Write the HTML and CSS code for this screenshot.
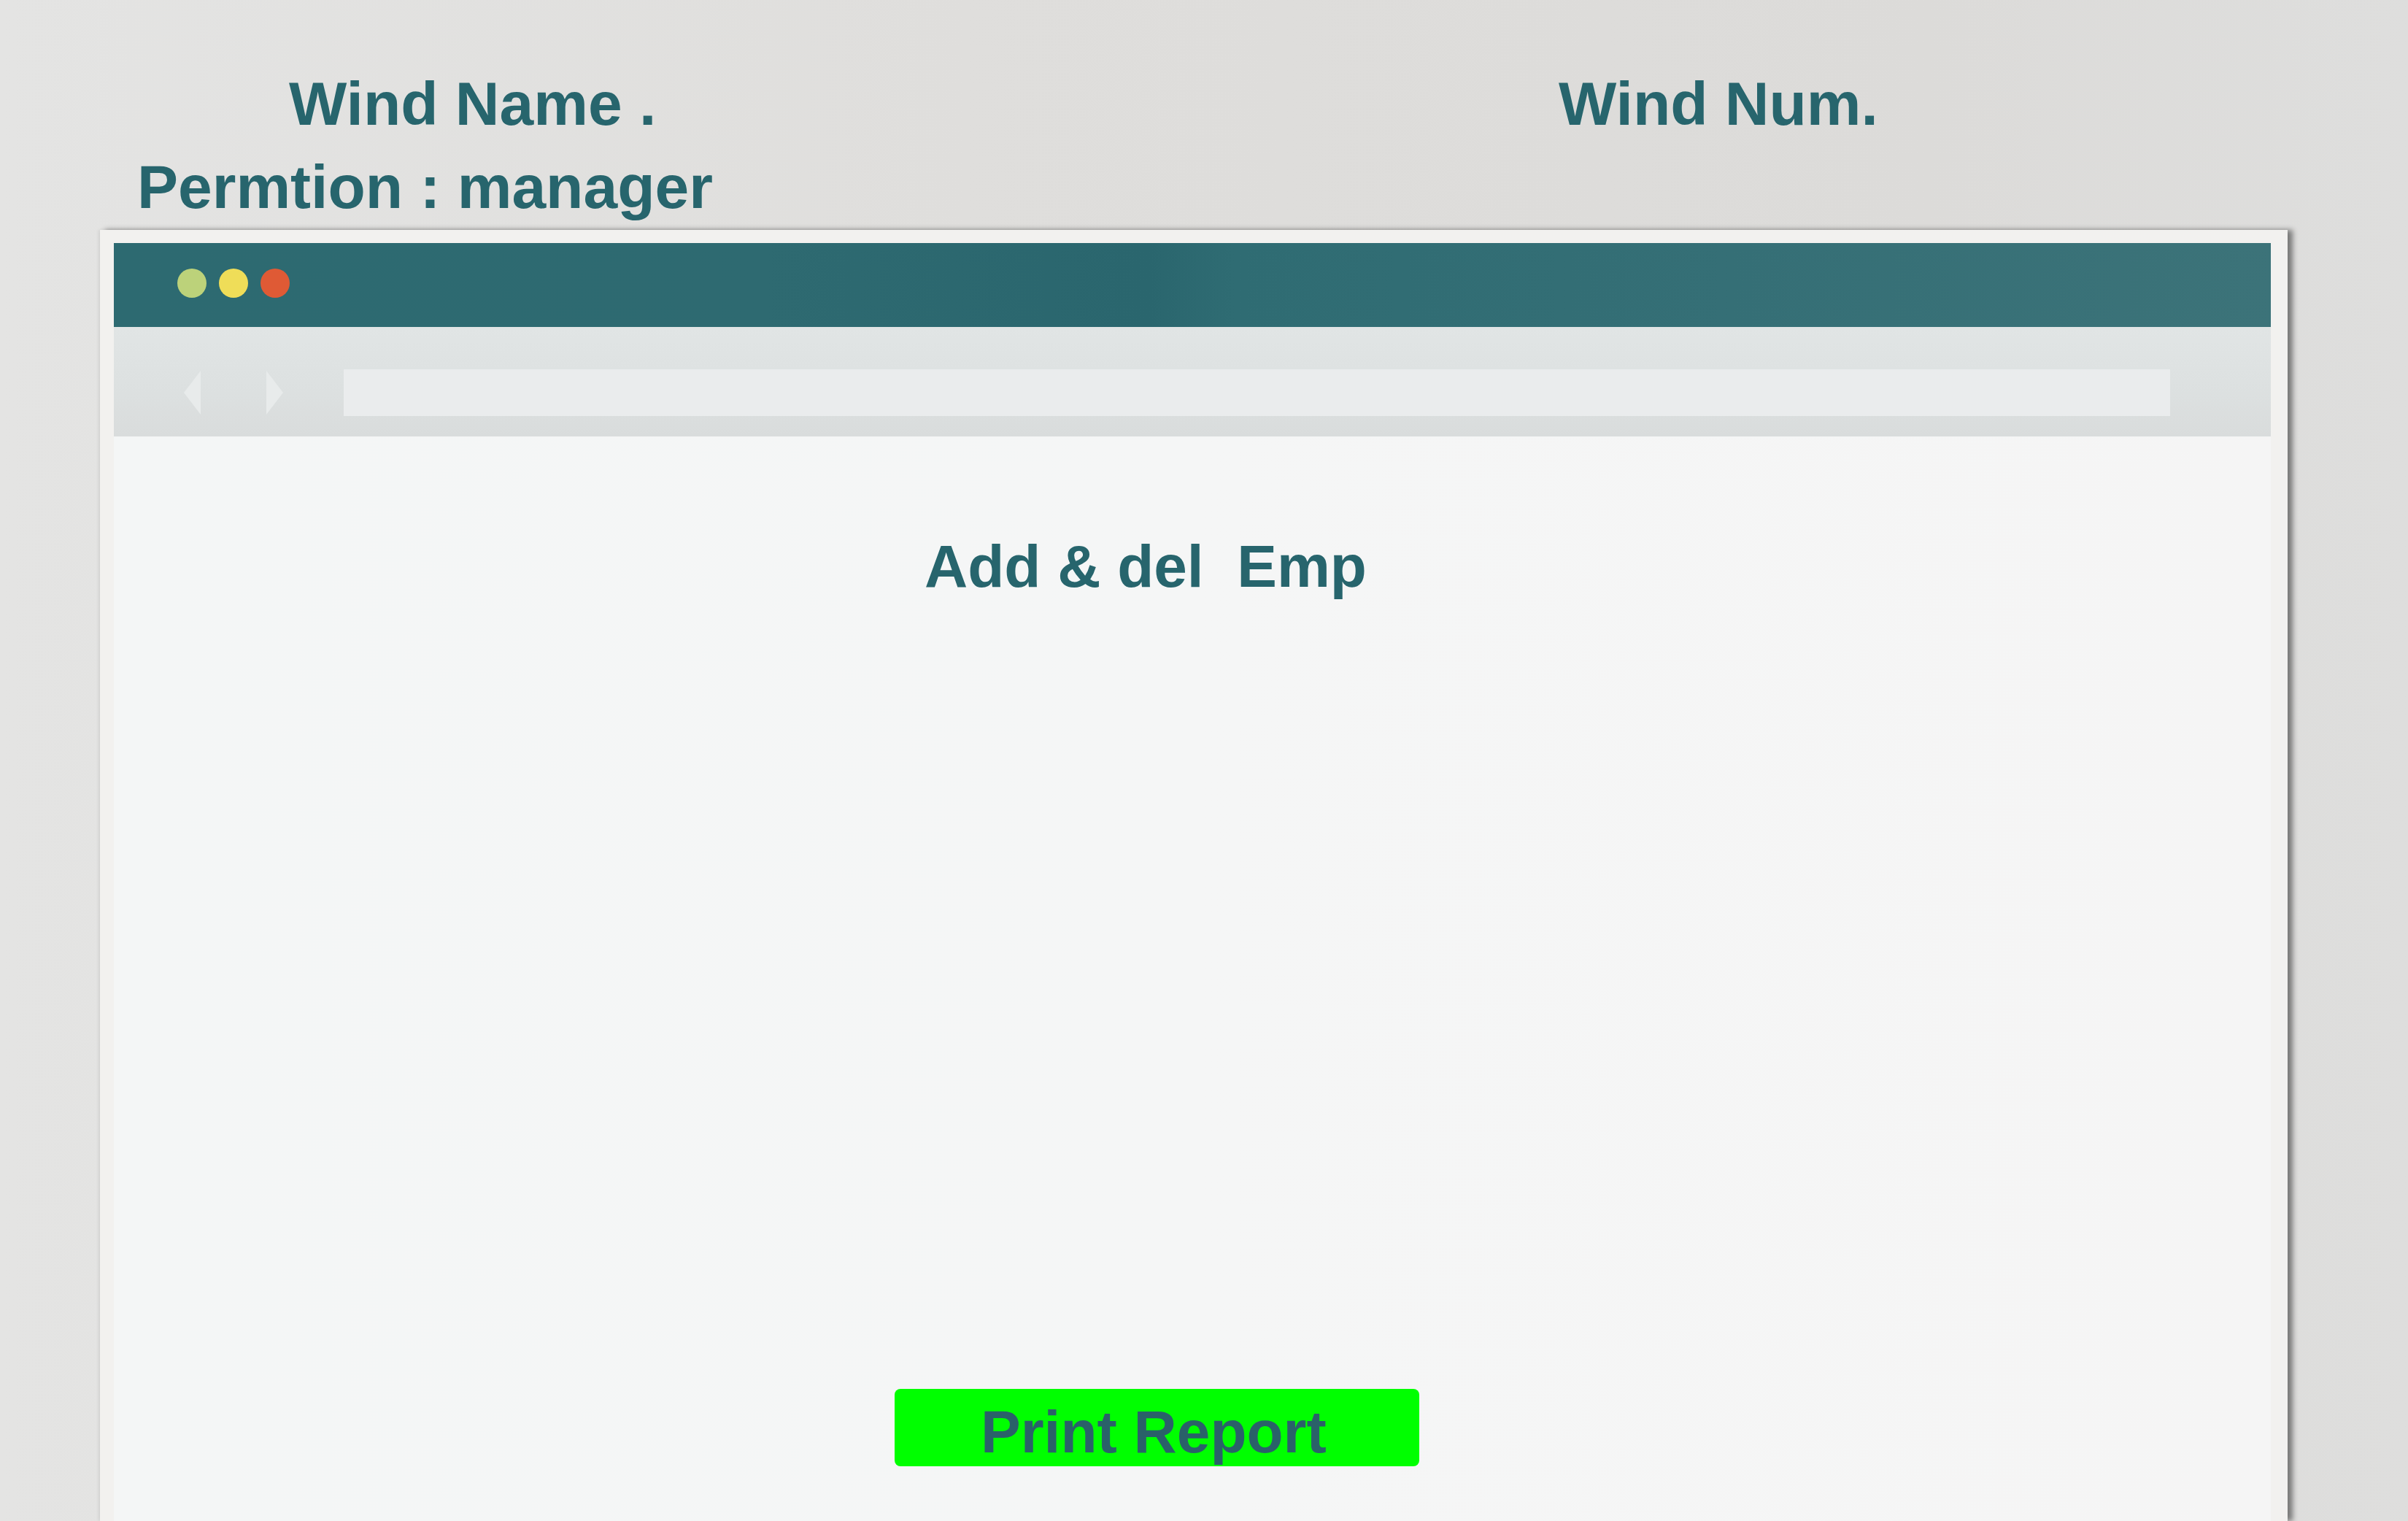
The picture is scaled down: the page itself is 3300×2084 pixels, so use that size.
FILE: index.html
```html
<!DOCTYPE html>
<html>
<head>
<meta charset="utf-8">
<link rel="stylesheet" href="styles.css">
</head>
<body>
<div class="page">
  <header class="top">
    <div class="row1">
      <span class="wname">Wind Name .</span>
      <span class="wnum">Wind Num.</span>
    </div>
    <div class="perm">Permtion : manager</div>
  </header>
  <div class="frame">
    <div class="titlebar">
      <span class="dot green"></span>
      <span class="dot yellow"></span>
      <span class="dot red"></span>
    </div>
    <div class="navbar">
      <svg class="arrow back" width="23" height="60" viewBox="0 0 23 60"><polygon points="23,0 23,60 0,30" /></svg>
      <svg class="arrow fwd" width="23" height="60" viewBox="0 0 23 60"><polygon points="0,0 0,60 23,30" /></svg>
      <div class="address"></div>
    </div>
    <main class="content">
      <h1 class="title">Add &amp; del  Emp</h1>
      <button class="print">Print Report</button>
    </main>
  </div>
</div>
</body>
</html>
```
FILE: styles.css
```css
html, body {
  margin: 0;
  padding: 0;
}
body {
  width: 3300px;
  height: 2084px;
  overflow: hidden;
  background: linear-gradient(90deg, #e4e4e3 0%, #dfdedc 40%, #dcdbd9 80%, #dededd 100%);
  font-family: "Liberation Sans", Arial, sans-serif;
  font-weight: bold;
  color: #27656d;
}
.page {
  display: flex;
  flex-direction: column;
  height: 2084px;
}
.top {
  padding: 92px 0 0 188px;
  font-size: 84px;
  line-height: 100px;
}
.row1 {
  display: flex;
  white-space: pre;
}
.wname {
  margin-left: 208px;
  width: 1740px;
}
.perm {
  margin-top: 14px;
  white-space: pre;
}
.frame {
  margin: 9px 0 0 137px;
  width: 2998px;
  flex: 1;
  box-sizing: border-box;
  padding: 18px 23px 0 19px;
  background: #f2f1ef;
  box-shadow: 7px 0 7px rgba(0, 0, 0, 0.45), -2px 0 4px rgba(0, 0, 0, 0.08);
  display: flex;
  flex-direction: column;
}
.titlebar {
  height: 115px;
  box-sizing: border-box;
  padding: 0 0 6px 87px;
  display: flex;
  align-items: center;
  gap: 17px;
  background: linear-gradient(90deg, #2d6a71 0%, #2e6a71 30%, #2a666e 48%, #2f6c73 52%, #356f76 75%, #3c7379 100%);
}
.dot {
  width: 40px;
  height: 40px;
  border-radius: 50%;
}
.green { background: #bcd27a; }
.yellow { background: #efdd58; }
.red { background: #df5a35; }
.navbar {
  height: 150px;
  box-sizing: border-box;
  padding: 58px 138px 28px 96px;
  display: flex;
  align-items: center;
  background: linear-gradient(180deg, #e1e5e5 0%, #dde1e1 50%, #d9dcdc 100%);
}
.arrow {
  fill: #e8ebeb;
  flex: none;
}
.back {
  margin-right: 90px;
}
.fwd {
  margin-right: 83px;
}
.address {
  flex: 1;
  height: 64px;
  background: #eaeced;
}
.content {
  flex: 1;
  background: linear-gradient(90deg, #f4f6f6 0%, #f5f6f6 50%, #f5f5f5 100%);
  padding: 128px 0 0 1111px;
  display: flex;
  flex-direction: column;
  align-items: flex-start;
}
.title {
  margin: 0;
  font-size: 82px;
  line-height: 100px;
  font-weight: bold;
  white-space: pre;
  color: #27656d;
}
.print {
  margin: 1077px 0 0 -41px;
  width: 719px;
  height: 106px;
  box-sizing: border-box;
  border: none;
  border-radius: 8px;
  background: #00ff00;
  padding: 12px 0 0 118px;
  text-align: left;
  font-family: "Liberation Sans", Arial, sans-serif;
  font-weight: bold;
  font-size: 82px;
  line-height: 94px;
  color: #2a6169;
  display: block;
}
```
